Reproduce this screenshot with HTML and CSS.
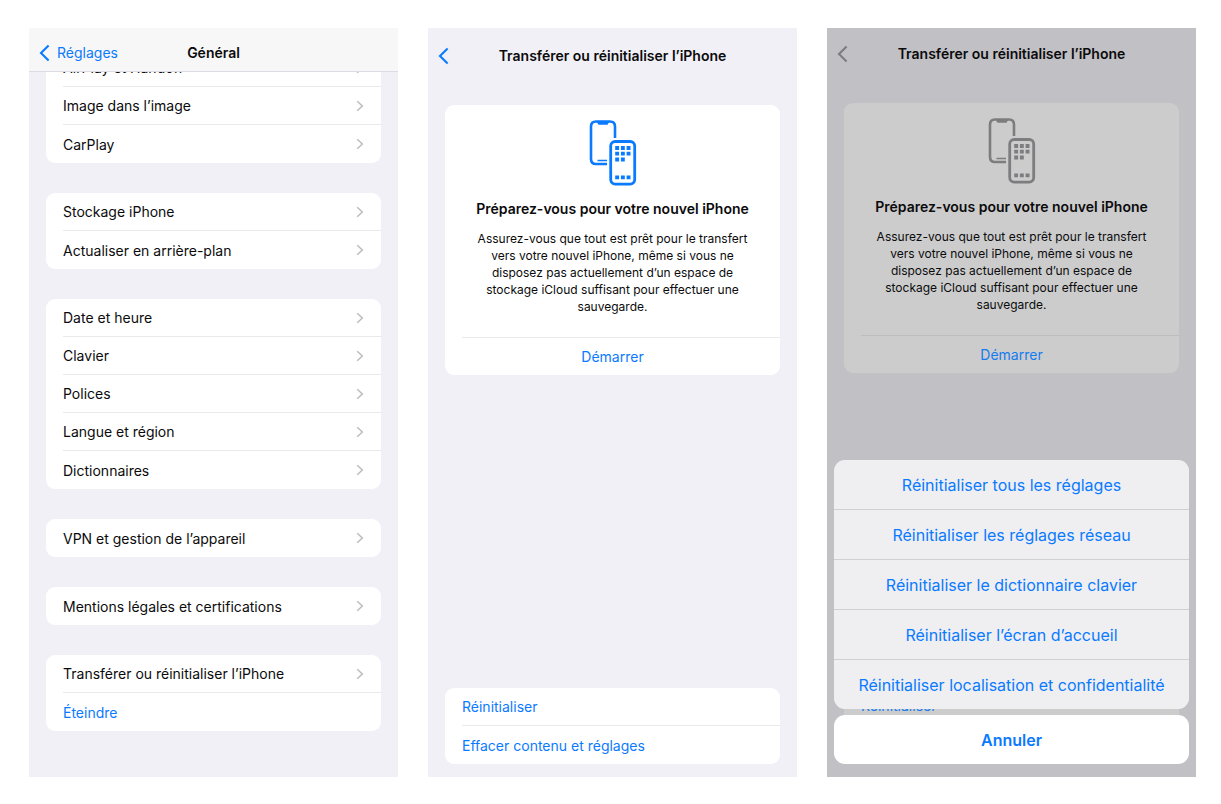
FILE: index.html
```html
<!DOCTYPE html>
<html lang="fr">
<head>
<meta charset="utf-8">
<meta name="viewport" content="width=device-width, initial-scale=1">
<title>Transférer ou réinitialiser l’iPhone</title>
<link rel="stylesheet" href="styles.css">
</head>
<body>
<svg class="defs" aria-hidden="true">
  <symbol id="chevron" viewBox="0 0 8 12"><path d="M1.2 1.3 6.3 6 1.2 10.7" fill="none" stroke="currentColor" stroke-width="1.5"/></symbol>
  <symbol id="back" viewBox="0 0 11 18"><path d="M9.6 1.6 2 9l7.6 7.4" fill="none" stroke="currentColor" stroke-width="2.1"/></symbol>
  <symbol id="phones" viewBox="0 0 48 66">
    <path d="M26 18V6.500Q26 1.500 21 1.500H7Q2 1.500 2 6.500V39Q2 44 7 44H18" fill="none" stroke="currentColor" stroke-width="2.600"/>
    <path d="M7.500 1.500H20.500L18.500 4.800H9.500Z" fill="currentColor"/>
    <path d="M8.500 40.500H18" stroke="currentColor" stroke-width="1.400"/>
    <rect x="21.700" y="21.500" width="24" height="42.600" rx="4.500" fill="none" stroke="currentColor" stroke-width="2.800"/>
    <path d="M26.200 28h15.500M26.200 33.700h15.500M26.200 39.500h10M26.200 57.300h15.500" stroke="currentColor" stroke-width="3.800" stroke-dasharray="3.900 1.800"/>
  </symbol>
</svg>
<main class="screens">

  <section class="screen">
    <header class="navbar navbar-blur">
      <button class="back" type="button"><svg class="back-icon"><use href="#back"/></svg><span>Réglages</span></button>
      <h1 class="title">Général</h1>
    </header>
    <div class="scroller">
      <div class="group">
        <button class="row" type="button">AirPlay et Handoff<svg class="chevron"><use href="#chevron"/></svg></button>
        <button class="row" type="button">Image dans l’image<svg class="chevron"><use href="#chevron"/></svg></button>
        <button class="row" type="button">CarPlay<svg class="chevron"><use href="#chevron"/></svg></button>
      </div>
      <div class="group">
        <button class="row" type="button">Stockage iPhone<svg class="chevron"><use href="#chevron"/></svg></button>
        <button class="row" type="button">Actualiser en arrière-plan<svg class="chevron"><use href="#chevron"/></svg></button>
      </div>
      <div class="group">
        <button class="row" type="button">Date et heure<svg class="chevron"><use href="#chevron"/></svg></button>
        <button class="row" type="button">Clavier<svg class="chevron"><use href="#chevron"/></svg></button>
        <button class="row" type="button">Polices<svg class="chevron"><use href="#chevron"/></svg></button>
        <button class="row" type="button">Langue et région<svg class="chevron"><use href="#chevron"/></svg></button>
        <button class="row" type="button">Dictionnaires<svg class="chevron"><use href="#chevron"/></svg></button>
      </div>
      <div class="group">
        <button class="row" type="button">VPN et gestion de l’appareil<svg class="chevron"><use href="#chevron"/></svg></button>
      </div>
      <div class="group">
        <button class="row" type="button">Mentions légales et certifications<svg class="chevron"><use href="#chevron"/></svg></button>
      </div>
      <div class="group">
        <button class="row" type="button">Transférer ou réinitialiser l’iPhone<svg class="chevron"><use href="#chevron"/></svg></button>
        <button class="row row-link" type="button">Éteindre</button>
      </div>
    </div>
  </section>

  <section class="screen">
    <header class="navbar navbar-plain">
      <button class="back" type="button" aria-label="Retour"><svg class="back-icon"><use href="#back"/></svg></button>
      <h1 class="title">Transférer ou réinitialiser l’iPhone</h1>
    </header>
    <div class="content">
      <article class="group card">
        <svg class="phones" aria-hidden="true"><use href="#phones"/></svg>
        <h2 class="card-title">Préparez-vous pour votre nouvel iPhone</h2>
        <p class="card-text">Assurez-vous que tout est prêt pour le transfert<br>vers votre nouvel iPhone, même si vous ne<br>disposez pas actuellement d’un espace de<br>stockage iCloud suffisant pour effectuer une<br>sauvegarde.</p>
        <button class="row row-link row-center" type="button">Démarrer</button>
      </article>
      <div class="group">
        <button class="row row-link" type="button">Réinitialiser</button>
        <button class="row row-link" type="button">Effacer contenu et réglages</button>
      </div>
    </div>
  </section>

  <section class="screen screen-dimmed">
    <header class="navbar navbar-plain">
      <button class="back" type="button" aria-label="Retour"><svg class="back-icon"><use href="#back"/></svg></button>
      <h1 class="title">Transférer ou réinitialiser l’iPhone</h1>
    </header>
    <div class="content">
      <article class="group card">
        <svg class="phones" aria-hidden="true"><use href="#phones"/></svg>
        <h2 class="card-title">Préparez-vous pour votre nouvel iPhone</h2>
        <p class="card-text">Assurez-vous que tout est prêt pour le transfert<br>vers votre nouvel iPhone, même si vous ne<br>disposez pas actuellement d’un espace de<br>stockage iCloud suffisant pour effectuer une<br>sauvegarde.</p>
        <button class="row row-link row-center" type="button">Démarrer</button>
      </article>
      <div class="group group-covered">
        <button class="row row-link" type="button">Réinitialiser</button>
      </div>
    </div>
    <div class="sheet" role="dialog" aria-label="Réinitialiser">
      <div class="actions">
        <button class="action" type="button">Réinitialiser tous les réglages</button>
        <button class="action" type="button">Réinitialiser les réglages réseau</button>
        <button class="action" type="button">Réinitialiser le dictionnaire clavier</button>
        <button class="action" type="button">Réinitialiser l’écran d’accueil</button>
        <button class="action" type="button">Réinitialiser localisation et confidentialité</button>
      </div>
      <button class="cancel" type="button">Annuler</button>
    </div>
  </section>

</main>
</body>
</html>
```
FILE: styles.css
```css
* { box-sizing: border-box; }

body {
  margin: 0;
  background: #fff;
  color: #0b0b0c;
  font-family: Inter, "Liberation Sans", sans-serif;
  font-size: 14px;
}

button {
  margin: 0;
  padding: 0;
  border: 0;
  background: none;
  color: inherit;
  font: inherit;
}

.defs { display: none; }

.screens {
  display: grid;
  grid-template-columns: repeat(3, 1fr);
  gap: 30px;
  min-height: 100vh;
  padding: 28px 25px 27px 29px;
}

.screen {
  --link: #0a7aff;
  --accent: #0a7aff;
  --surface: #fff;
  --line: #e9e9ec;
  position: relative;
  display: flex;
  flex-direction: column;
  overflow: hidden;
  background: #f1f0f6;
}

.screen-dimmed {
  --link: #147cf0;
  --accent: #7d7d7f;
  --surface: #ccc;
  --line: #bdbdbf;
  background: #c1c0c5;
}

.navbar {
  display: grid;
  grid-template-columns: 1fr auto 1fr;
  align-items: center;
  flex: none;
  padding: 0 10px;
}

.navbar-blur {
  height: 44px;
  padding-top: 6px;
  border-bottom: 1px solid #dcdce4;
  background: #f7f7f8;
}

.navbar-plain { height: 55px; }
.screen-dimmed .navbar-plain { height: 51px; }

.title {
  grid-column: 2;
  margin: 0;
  font-size: 14px;
  font-weight: 600;
}

.back {
  display: flex;
  align-items: center;
  justify-self: start;
  gap: 7px;
  color: var(--accent);
}

.back-icon { width: 11px; height: 18px; }

.scroller {
  display: flex;
  flex: 1 1 0;
  flex-direction: column;
  justify-content: flex-end;
  gap: 30px;
  min-height: 0;
  overflow: hidden;
  padding: 0 17px 46px;
}

.content {
  display: flex;
  flex: 1;
  flex-direction: column;
  justify-content: space-between;
  padding: 22px 17px 13px;
}

.screen-dimmed .content { padding: 24px 17px 15px; }

.group {
  flex: none;
  overflow: hidden;
  border-radius: 9px;
  background: var(--surface);
}

.group-covered { padding-bottom: 38px; }

.row {
  display: flex;
  align-items: center;
  justify-content: space-between;
  width: calc(100% - 17px);
  height: 38px;
  margin-left: 17px;
  padding-right: 17px;
  border-bottom: 1px solid var(--line);
}

.row:last-child { border-bottom: 0; }
.row-link { color: var(--link); }

.chevron { width: 8px; height: 12px; color: #bcbcc0; }

.card {
  display: flex;
  flex-direction: column;
  align-items: center;
  padding-top: 15px;
  text-align: center;
}

.row-center:last-child {
  justify-content: center;
  border-top: 1px solid var(--line);
}

.phones { width: 48px; height: 66px; color: var(--accent); }

.card-title {
  margin: 14px 0 12px;
  font-size: 14px;
  font-weight: 600;
  line-height: 18px;
}

.card-text {
  margin: 0 0 22px;
  font-size: 12px;
  line-height: 17px;
}

.sheet {
  position: absolute;
  right: 7px;
  bottom: 13px;
  left: 7px;
  display: grid;
  gap: 6px;
}

.actions {
  display: grid;
  gap: 1px;
  overflow: hidden;
  border-radius: 11px;
  background: #d0d0d4;
}

.action,
.cancel {
  height: 49px;
  color: #0a7aff;
  font-size: 16px;
}

.action { background: #efeff2; }

.cancel {
  border-radius: 11px;
  background: #fff;
  font-weight: 600;
}
```
